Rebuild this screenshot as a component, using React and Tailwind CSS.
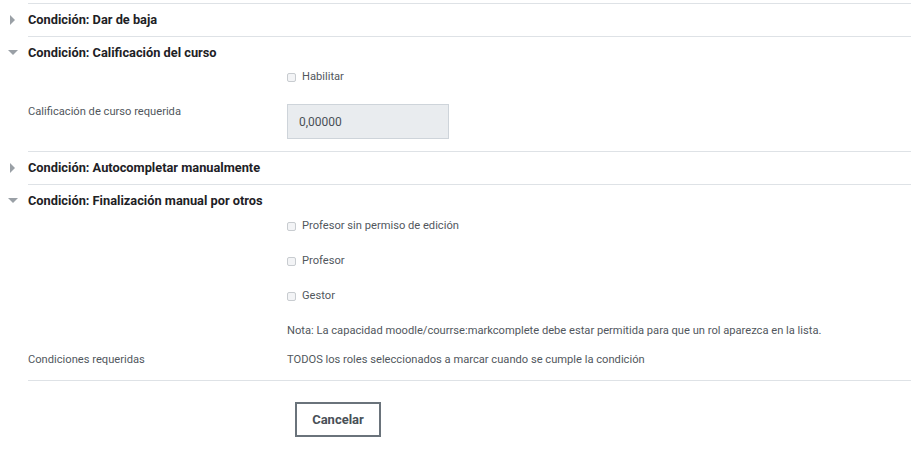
import React from 'react';

const font = { fontFamily: 'Roboto, "Liberation Sans", sans-serif' };

const Caret = ({ open }) => (
    <span className="w-[28px] flex items-center justify-center pr-[3px]">
        {open ? (
            <svg width="10" height="6" viewBox="0 0 10 6"><path d="M0 0 L10 0 L5 5 Z" fill="#9aa0a6" /></svg>
        ) : (
            <svg width="6" height="10" viewBox="0 0 6 10"><path d="M0 0 L5 5 L0 10 Z" fill="#9aa0a6" /></svg>
        )}
    </span>
);

const Header = ({ title, open, h }) => (
    <div className={`flex items-center ${h} text-[12.8px] font-bold text-[#1d2125]`}>
        <Caret open={open} />
        <span>{title}</span>
    </div>
);

const Line = () => <div className="ml-[28px] border-t border-[#dee2e6]" />;

const Box = () => (
    <span className="w-[9px] h-[9px] border border-[#c8ccd0] bg-[#f3f4f6] rounded-[2px] mr-[6px]" />
);

const Check = ({ label }) => (
    <div className="flex items-center h-[20px] pl-[287px] text-[11.15px] text-[#51575d]">
        <Box />
        <span>{label}</span>
    </div>
);

const App = () => {
    return (
        <div className="w-[911px] h-[462px] bg-white overflow-hidden" style={font}>
            <div className="h-[3px]" />
            <Line />
            <Header title="Condición: Dar de baja" h="h-[32px]" />
            <Line />

            <Header title="Condición: Calificación del curso" open h="h-[31px]" />
            <div className="flex items-center h-[18px] pl-[287px] text-[11.15px] text-[#51575d]">
                <Box />
                <span>Habilitar</span>
            </div>
            <div className="flex mt-[18px] pl-[28px]">
                <div className="w-[259px] text-[11.15px] text-[#51575d]">Calificación de curso requerida</div>
                <div className="w-[162px] h-[35px] bg-[#e9ecef] border border-[#ced4da] flex items-center px-[11px] text-[12px] text-[#495057]">
                    0,00000
                </div>
            </div>
            <div className="h-[12px]" />
            <Line />

            <Header title="Condición: Autocompletar manualmente" h="h-[32px]" />
            <Line />

            <Header title="Condición: Finalización manual por otros" open h="h-[31px]" />
            <Check label="Profesor sin permiso de edición" />
            <div className="h-[15px]" />
            <Check label="Profesor" />
            <div className="h-[15px]" />
            <Check label="Gestor" />
            <div className="h-[15px]" />
            <div className="flex items-center h-[20px] pl-[287px] text-[11.15px] text-[#51575d]">
                Nota: La capacidad moodle/courrse:markcomplete debe estar permitida para que un rol aparezca en la lista.
            </div>
            <div className="flex items-center h-[20px] mt-[9px] pl-[28px] text-[11.15px] text-[#51575d]">
                <span className="w-[259px]">Condiciones requeridas</span>
                <span>TODOS los roles seleccionados a marcar cuando se cumple la condición</span>
            </div>
            <div className="h-[10px]" />
            <Line />

            <div className="pl-[295px] mt-[21px]">
                <button className="w-[86px] h-[35px] border-2 border-[#6a737b] bg-white text-[13px] font-bold text-[#495057]">
                    Cancelar
                </button>
            </div>
        </div>
    );
};

export default App;
